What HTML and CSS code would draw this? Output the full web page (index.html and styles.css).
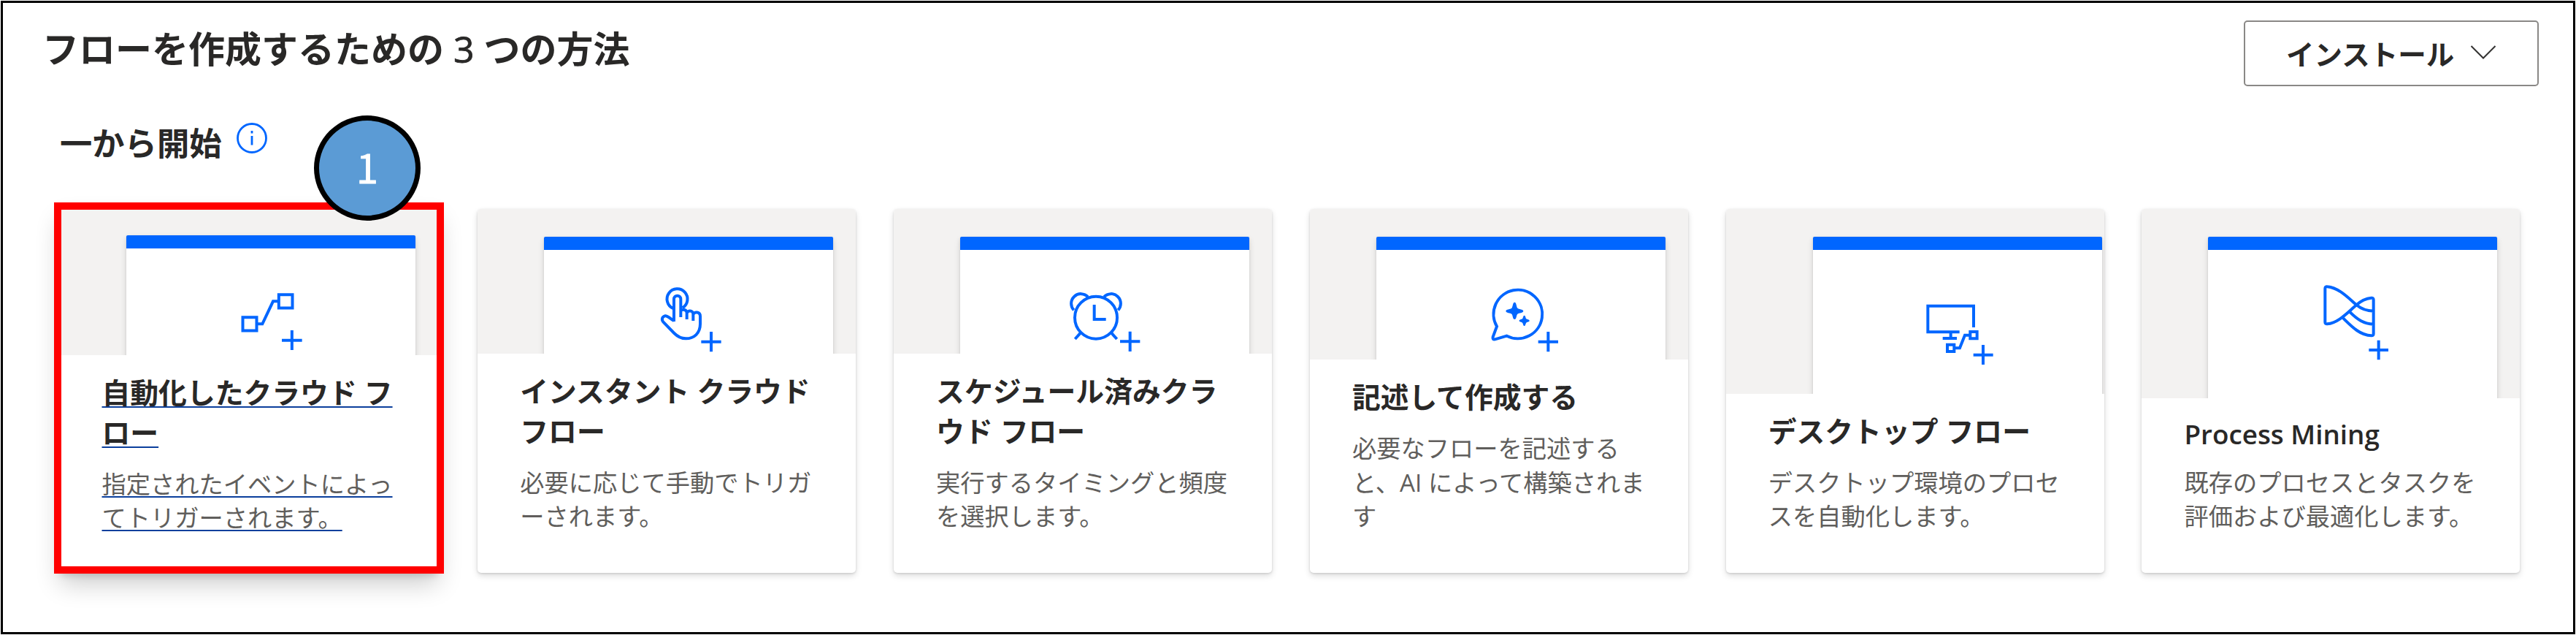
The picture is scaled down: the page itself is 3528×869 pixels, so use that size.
FILE: index.html
```html
<!DOCTYPE html>
<html lang="ja">
<head>
<meta charset="utf-8">
<title>フローを作成するための 3 つの方法</title>
<link rel="stylesheet" href="styles.css">
</head>
<body>
<main class="page">
  <header class="top">
    <h1 class="title">フローを作成するための <span class="num">3</span> つの方法</h1>
    <button class="install">インストール
      <svg class="chevron" viewBox="0 0 36 22"><path d="M1.500 2 18 18.500 34.500 2"/></svg>
    </button>
  </header>
  <div class="subhead">
    <h2 class="subtitle">一から開始</h2>
    <svg class="info" viewBox="0 0 44 44"><circle cx="22" cy="22" r="19.500"/><path d="M22 19v12.500M22 12v3.500"/></svg>
  </div>
  <section class="cards">
    <article class="card card-hover">
      <div class="art"><div class="panel">
        <svg class="icon icon-flow" viewBox="0 0 360 360"><path d="M97.500 162.500h57v55h-57zM245.500 69.500h56v55h-56zM155 190h23l44-93h24M258 257h83M299.500 216v81"/></svg>
      </div></div>
      <div class="body">
        <h3 class="name">自動化したクラウド フ<br>ロー</h3>
        <p class="desc">指定されたイベントによっ<br>てトリガーされます。</p>
      </div>
      <div class="highlight"><span class="step">1</span></div>
    </article>
    <article class="card">
      <div class="art"><div class="panel">
        <svg class="icon icon-hand" viewBox="0 0 360 360"><path d="M95 126A42 42 0 1 1 134 124M99 180V88a14 14 0 0 1 28 0V162M127 136C134 128 152 130 152 145V171M152 147C154 132 178 134 178 149V177M178 152C181 137 207 140 207 158V190C207 228 182 250 148 250C125 250 112 240 100 228L56 183C46 172 51 160 62 157C74 155 82 168 99 177M211 263h82M252 222v82"/></svg>
      </div></div>
      <div class="body">
        <h3 class="name">インスタント クラウド<br>フロー</h3>
        <p class="desc">必要に応じて手動でトリガ<br>ーされます。</p>
      </div>
    </article>
    <article class="card">
      <div class="art"><div class="panel">
        <svg class="icon icon-clock" viewBox="0 0 360 360"><circle cx="186" cy="164" r="87"/><path d="M95 133A37 37 0 1 1 153 79M277 133A37 37 0 1 0 219 79M179 111v60h48M125 224l-25 28M247 224l25 28M285 262h82M326 221v82"/></svg>
      </div></div>
      <div class="body">
        <h3 class="name">スケジュール済みクラ<br>ウド フロー</h3>
        <p class="desc">実行するタイミングと頻度<br>を選択します。</p>
      </div>
    </article>
    <article class="card">
      <div class="art"><div class="panel">
        <svg class="icon icon-chat" viewBox="0 0 360 360"><path d="M57 200A100 100 0 1 1 98 239L50 253Q38 255 41 243ZM227 263h82M268 222v82"/><path class="solid" d="M130 101C138 101 137 120 142 125C147 130 166 129 166 137S147 144 142 149C137 154 138 171 130 171S123 154 118 149C113 144 94 145 94 137S113 130 118 125C123 120 122 101 130 101ZM170 155C175 155 175 166 178 169C181 172 191 172 191 177S181 182 178 185C175 188 175 198 170 198S165 188 162 185C159 182 149 182 149 177S159 172 162 169C165 166 165 155 170 155Z"/></svg>
      </div></div>
      <div class="body">
        <h3 class="name">記述して作成する</h3>
        <p class="desc">必要なフローを記述する<br>と、AI によって構築されま<br>す</p>
      </div>
    </article>
    <article class="card">
      <div class="art"><div class="panel panel-wide">
        <svg class="icon icon-desktop" viewBox="0 0 360 360"><path d="M234 144V56H46V163H176M140 163v26M107 189h58M220 162h28v28h-28zM126 215h28v28h-28zM157 229h20l21-53h22M233 257h81M273 216v81"/></svg>
      </div></div>
      <div class="body">
        <h3 class="name">デスクトップ フロー</h3>
        <p class="desc">デスクトップ環境のプロセ<br>スを自動化します。</p>
      </div>
    </article>
    <article class="card">
      <div class="art"><div class="panel">
        <svg class="icon icon-mining" viewBox="0 0 360 360"><path d="M82 37Q73 36 73 45V182Q73 191 82 190C128 186 166 142 202 112Q230 86 263 83Q272 82 272 91V230Q272 239 263 238C215 236 182 200 145 164M82 37C130 42 165 80 202 112Q232 137 272 137M173 139C206 172 232 190 272 191M253 297h80M293 257v80"/></svg>
      </div></div>
      <div class="body">
        <h3 class="name name-latin">Process Mining</h3>
        <p class="desc">既存のプロセスとタスクを<br>評価および最適化します。</p>
      </div>
    </article>
  </section>
</main>
</body>
</html>
```
FILE: styles.css
```css
* { box-sizing: border-box; }
body { margin: 0; background: #fff; }
.page {
  width: 3526px;
  height: 867px;
  margin: 1px;
  border: 3px solid #000;
  background: #fff;
  font-family: "Open Sans", "Noto Sans CJK JP", sans-serif;
  color: #292827;
}
h1, h2, h3, p { margin: 0; white-space: nowrap; }
.top {
  display: flex;
  justify-content: space-between;
  padding: 24px 47px 0 54px;
  height: 157px;
}
.title { font-size: 50px; line-height: 78px; font-weight: 700; }
.num { font-weight: 400; -webkit-text-stroke: .8px #292827; }
.install {
  display: flex;
  align-items: center;
  gap: 22px;
  width: 404px;
  height: 90px;
  padding: 0 0 2px 56px;
  border: 2px solid #8a8886;
  border-radius: 5px;
  background: #fff;
  color: inherit;
  font: 700 38.500px/50px "Noto Sans CJK JP", sans-serif;
  white-space: nowrap;
}
.chevron { width: 36px; height: 22px; fill: none; stroke: #323130; stroke-width: 2; }
.subhead { display: flex; gap: 19px; height: 125px; padding-left: 78px; }
.subtitle { font-size: 44.300px; line-height: 70px; font-weight: 700; }
.info { width: 44px; height: 44px; margin-top: 6px; fill: none; stroke: #0066ff; stroke-width: 2.800; }
.cards {
  display: grid;
  grid-template-columns: repeat(6, 518px);
  column-gap: 51.800px;
  padding-left: 80.500px;
}
.card {
  position: relative;
  display: flex;
  flex-direction: column;
  width: 518px;
  height: 498px;
  border-radius: 5px;
  background: #fff;
  box-shadow: 0 4px 8px rgba(0,0,0,.132), 0 1px 3px rgba(0,0,0,.14);
}
.card-hover {
  margin-left: -3px;
  box-shadow: 0 15px 34px rgba(0,0,0,.2), 0 4px 10px rgba(0,0,0,.14);
}
.art {
  flex: 1 1 0;
  display: flex;
  overflow: hidden;
  padding: 37.500px 0 0 91px;
  border-radius: 5px 5px 0 0;
  background: #f3f2f1;
}
.panel {
  flex: none;
  width: 396px;
  height: 300px;
  border-top: 18px solid #0066ff;
  border-radius: 2px;
  background: #fff;
  box-shadow: 0 4px 9px rgba(0,0,0,.132), 0 1px 3px rgba(0,0,0,.108);
}
.panel-wide { margin-left: 28px; }
.card-hover .art { padding-top: 35.500px; }
.icon {
  display: block;
  width: 120px;
  height: 120px;
  margin-top: 38.500px;
  overflow: visible;
  fill: none;
  stroke: #0066ff;
  stroke-width: 12;
}
.icon-flow { margin: 40.500px 0 0 127.500px; }
.icon-hand { margin-left: 144.800px; }
.icon-clock { margin-left: 124.400px; }
.icon-chat { margin-left: 146.200px; }
.icon-desktop { margin: 58.500px 0 0 142px; }
.icon-mining { margin-left: 135.700px; }
.solid { fill: #0066ff; stroke: none; }
.body { padding: 24px 0 54px 58px; }
.card-hover .body { padding-bottom: 52px; }
.name { font-size: 38.800px; line-height: 55.500px; font-weight: 700; }
.name-latin { font-weight: 600; line-height: 50px; font-size: 36.800px; }
.desc { margin-top: 18px; font-size: 33.250px; line-height: 46.700px; color: #605e5c; }
.card-hover .name, .card-hover .desc {
  text-decoration: underline #0b3f9c 2px;
  text-decoration-skip-ink: none;
  text-underline-offset: 4px;
}
/* Numbered callout laid over the first card */
.highlight {
  position: absolute;
  inset: -9px -8.500px -1px -7.500px;
  border: 10px solid #f00;
}
.step {
  position: absolute;
  left: 346px;
  top: -129px;
  display: flex;
  align-items: center;
  justify-content: center;
  width: 146px;
  height: 144px;
  padding-bottom: 4px;
  border: 7px solid #000;
  border-radius: 50%;
  background: #5b9bd5;
  color: #fff;
  font: 400 54px/60px "Noto Sans CJK JP", sans-serif;
  -webkit-text-stroke: .8px #fff;
}
```
